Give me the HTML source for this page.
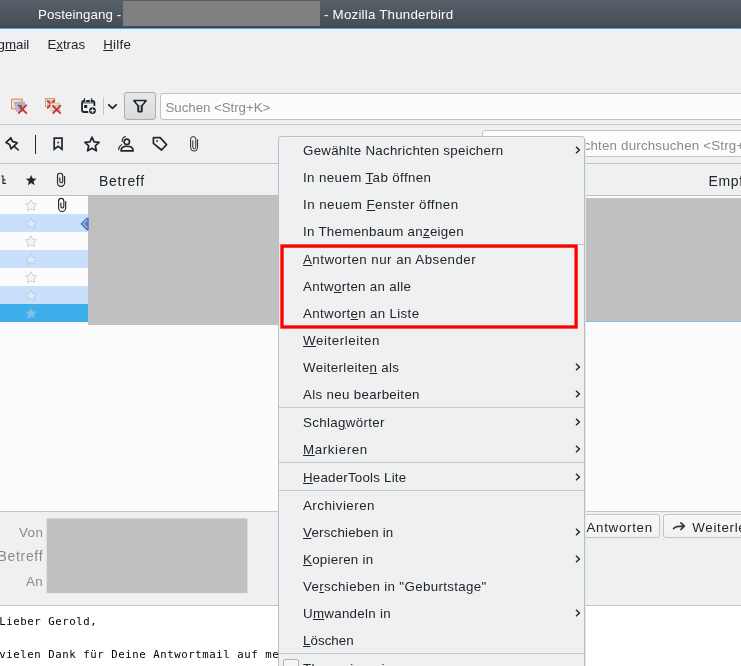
<!DOCTYPE html>
<html><head><meta charset="utf-8">
<style>
*{box-sizing:border-box;margin:0;padding:0}
html,body{width:741px;height:666px;overflow:hidden;background:#eff0f1}
body{position:relative;will-change:transform;font-family:"Liberation Sans",sans-serif;font-size:13.33px;color:#232629}
.a{position:absolute}
.t{position:absolute;white-space:nowrap;line-height:16px;height:16px}
u{text-decoration:underline;text-decoration-thickness:1px;text-underline-offset:0.5px}
svg{position:absolute;overflow:visible}
.g{color:#898b8d}
.mono{font-family:"DejaVu Sans Mono","Liberation Mono",monospace;font-size:10.67px;letter-spacing:0.58px;color:#000}
</style></head><body>

<div class="a" style="left:0;top:0;width:741px;height:28px;background:linear-gradient(#57616a,#454c53)"></div>
<div class="a" style="left:0;top:27px;width:741px;height:1px;background:#3f464d"></div>
<div class="a" style="left:0;top:28px;width:741px;height:1px;background:#3daee9"></div>
<div class="t " id="t1" style="left:38px;top:7.4px;letter-spacing:0.080px;color:#fcfcfc;">Posteingang -</div>
<div class="a" style="left:123px;top:1px;width:196.5px;height:25px;background:#808080"></div>
<div class="t " id="t2" style="left:324px;top:7.4px;letter-spacing:0.212px;color:#fcfcfc;">- Mozilla Thunderbird</div>
<div class="t " id="b1" style="left:-2.5px;top:37.1px;letter-spacing:-0.015px;">g<u>m</u>ail</div>
<div class="t " id="b2" style="left:47.4px;top:37.1px;letter-spacing:-0.015px;">E<u>x</u>tras</div>
<div class="t " id="b3" style="left:103.2px;top:37.1px;letter-spacing:0.292px;"><u>H</u>ilfe</div>
<div class="a" style="left:124px;top:92px;width:32px;height:28px;background:linear-gradient(#e6e7e8,#d9dadb);border:1px solid #aaacae;border-radius:3px"></div>
<div class="a" style="left:160px;top:93px;width:600px;height:27px;background:#fcfcfc;border:1px solid #c0c2c4;border-radius:3px"></div>
<div class="t g" id="s1" style="left:165.5px;top:99.8px;letter-spacing:-0.055px;">Suchen &lt;Strg+K&gt;</div>
<div class="a" style="left:103px;top:97px;width:1px;height:18px;background:#c3c5c7"></div>
<div class="a" style="left:0;top:124px;width:741px;height:1px;background:#c6c8ca"></div>
<svg style="left:10px;top:97px" width="18" height="18" viewBox="10 97 18 18">
<defs><linearGradient id="eg" x1="0" y1="1" x2="1" y2="0"><stop offset="0" stop-color="#fff4e6"/><stop offset="0.6" stop-color="#fdeccf"/><stop offset="1" stop-color="#f9c983"/></linearGradient>
<radialGradient id="bg2" cx="0.5" cy="0.5" r="0.6"><stop offset="0" stop-color="#d6e8fb"/><stop offset="1" stop-color="#a9b6dc"/></radialGradient></defs>
<rect x="11.6" y="99.2" width="10.7" height="9.6" fill="url(#eg)" stroke="#d98c54" stroke-width="1.1"/>
<path d="M12.2 100 L15.5 104.2 L12.2 108" fill="none" stroke="#ecc39c" stroke-width="0.7"/>
<path d="M14.4 102.2 L24.8 102.2 L23.3 111.2 L16.4 111.2 Z" fill="#b8bce0" stroke="#9aa0cc" stroke-width="0.8"/>
<path d="M14.8 102.4 L24.4 102.4 L24 103.8 L15.2 103.8 Z" fill="#a4a9d2"/>
<rect x="19.8" y="104.8" width="2.6" height="4.6" fill="#27a244"/>
<path d="M18.6 105.3 L26.3 113.2 M26.3 105.2 L18.8 113.2" stroke="#d62f25" stroke-width="1.8" stroke-linecap="round"/>
</svg>
<svg style="left:44px;top:97px" width="18" height="18" viewBox="44 97 18 18">
<rect x="45.6" y="98.5" width="9" height="8" fill="url(#eg)" stroke="#dc965e" stroke-width="1"/>
<rect x="47" y="100" width="7" height="6.5" fill="url(#bg2)"/>
<path d="M47.6 100.7 L54.3 107.9 M54.3 100.6 L47.7 107.9" stroke="#d62f25" stroke-width="1.7" stroke-linecap="round"/>
<rect x="50.8" y="103.2" width="8.8" height="7.6" fill="url(#eg)" stroke="#e6b58c" stroke-width="0.9"/>
<rect x="52.6" y="105" width="7.4" height="7" fill="url(#bg2)"/>
<path d="M53 105.8 L60.3 113.1 M60.3 105.8 L53.2 113.1" stroke="#d62f25" stroke-width="1.8" stroke-linecap="round"/>
</svg>
<svg style="left:80px;top:97px" width="18" height="18" viewBox="80 97 18 18">
<path d="M94.4 106 L94.4 103 Q94.4 101 92.6 101 L84 101 Q82 101 82 103 L82 110 Q82 112 84 112 L88.5 112" fill="none" stroke="#232629" stroke-width="1.8"/>
<path d="M82.4 102.9 L94.2 102.9" stroke="#232629" stroke-width="0.9"/>
<path d="M84.5 98.2 L84.5 101.8 M91.5 98.2 L91.5 101.8" stroke="#232629" stroke-width="1.3"/>
<path d="M85.7 99 L85.7 102.2 M90.3 99 L90.3 102.2" stroke="#eff0f1" stroke-width="0.9"/>
<rect x="84.2" y="105" width="3" height="3" fill="#232629"/>
<circle cx="92.5" cy="110.6" r="4.3" fill="#eff0f1"/>
<circle cx="92.5" cy="110.6" r="3.4" fill="#232629"/>
<path d="M90.4 110.6 L94.6 110.6 M92.5 108.5 L92.5 112.7" stroke="#f4f4f5" stroke-width="1.2"/>
</svg>
<svg style="left:107px;top:102px" width="12" height="10" viewBox="107 102 12 10">
<path d="M108.8 104.8 L112.5 108.3 L116.2 104.8" fill="none" stroke="#232629" stroke-width="1.8" stroke-linecap="round" stroke-linejoin="round"/>
</svg>
<svg style="left:130px;top:97px" width="20" height="18" viewBox="130 97 20 18">
<defs><linearGradient id="fg" x1="0" y1="0" x2="0" y2="1"><stop offset="0" stop-color="#e2e3e4"/><stop offset="0.4" stop-color="#a2a3a4"/><stop offset="1" stop-color="#b8b9ba"/></linearGradient></defs>
<path d="M134 100.6 L146 100.6 L141.9 105.6 L141.9 111 Q141.9 111.7 141.2 111.7 L138.8 111.7 Q138.1 111.7 138.1 111 L138.1 105.6 Z" fill="url(#fg)" stroke="#232629" stroke-width="1.7" stroke-linejoin="round"/>
<path d="M135.6 101.4 L144.4 101.4 L141.5 104.9 L138.5 104.9 Z" fill="#e3e4e5"/>
</svg>

<div class="a" style="left:35px;top:135px;width:1px;height:19px;background:#232629"></div>
<div class="a" style="left:482px;top:130px;width:300px;height:27px;background:#fcfcfc;border:1px solid #c0c2c4;border-radius:3px"></div>
<div class="t g" id="s2" style="left:583.7px;top:137.6px;letter-spacing:0.180px;">chten durchsuchen &lt;Strg+</div>
<div class="a" style="left:0;top:163px;width:741px;height:1px;background:#c0c2c4"></div>
<svg style="left:0;top:126px" width="210" height="36" viewBox="0 126 210 36" fill="none" stroke="#232629" stroke-linejoin="round" stroke-linecap="round">
<path d="M5.9 142.6 L10.9 137.8 L12.4 141.4 L17.2 142.9 L11 148.8 L9.6 144.4 Z" stroke-width="1.7"/>
<path d="M14.2 146.3 L18.3 150" stroke-width="1.6"/>
<path d="M54.2 138.2 L62 138.2 L62 149.3 L58.1 146.4 L54.2 149.3 Z" stroke-width="1.7" stroke-linejoin="miter"/>
<circle cx="58.1" cy="142.5" r="0.9" fill="#232629" stroke="none"/>
<path d="M92 137.2 L94.1 141.9 L99.1 142.4 L95.3 145.8 L96.4 150.8 L92 148.2 L87.6 150.8 L88.7 145.8 L84.9 142.4 L89.9 141.9 Z" stroke-width="1.7"/>
<circle cx="126.8" cy="141.8" r="2.7" stroke-width="1.6"/>
<path d="M121 150.9 Q121 146.3 126.9 146.3 Q133.2 146.3 133.2 150.9 Z" stroke-width="1.6"/>
<path d="M125.2 136.5 Q122.2 137.6 122.2 141.5 M121.6 144.6 Q118.9 146.3 118.7 149.6" stroke-width="1.1"/>
<path d="M153.4 137.7 L160.1 137.7 L166.6 144.6 L161.5 150 L153.4 143.4 Z" stroke-width="1.7"/>
<circle cx="157" cy="141" r="0.9" fill="#232629" stroke="none"/>
<path d="M197.6 139.6 L197.6 147.6 A3.5 3.5 0 0 1 190.6 147.6 L190.6 139.2 A2.6 2.6 0 0 1 195.8 139.2 L195.8 147.3 A1.5 1.5 0 0 1 192.8 147.3 L192.8 140.8" stroke-width="1"/>
</svg>

<div class="t " id="c1" style="left:99px;top:173.4px;letter-spacing:0.680px;font-size:14px;">Betreff</div>
<div class="t " id="c2" style="left:708.5px;top:173.4px;letter-spacing:0.680px;font-size:14px;">Empf</div>
<div class="a" style="left:0;top:195px;width:741px;height:1px;background:#bcbec0"></div>
<div class="a" style="left:0;top:196px;width:741px;height:315px;background:#fcfcfc"></div>
<div class="a" style="left:0;top:214px;width:741px;height:18px;background:#c8e0fc"></div>
<div class="a" style="left:0;top:250px;width:741px;height:18px;background:#c8e0fc"></div>
<div class="a" style="left:0;top:286px;width:741px;height:18px;background:#c8e0fc"></div>
<div class="a" style="left:0;top:304px;width:741px;height:18px;background:#3daee9"></div>
<div class="a" style="left:88px;top:196px;width:300px;height:129px;background:#c0c0c0"></div>
<div class="a" style="left:388px;top:196px;width:360px;height:126px;background:#fcfcfc"></div>
<div class="a" style="left:586px;top:197.5px;width:160px;height:123.5px;background:#c0c0c0"></div>
<div class="a" style="left:586px;top:321px;width:160px;height:1px;background:#7cc4ee"></div>
<svg style="left:0;top:166px" width="100" height="160" viewBox="0 166 100 160">
<path d="M1.2 176 L3 176 L3 183.3 L6 183.3 M3 179.8 L5.4 179.8" fill="none" stroke="#232629" stroke-width="1.15"/>
<path d="M31.20 174.90 L32.67 178.58 L36.62 178.84 L33.58 181.37 L34.55 185.21 L31.20 183.10 L27.85 185.21 L28.82 181.37 L25.78 178.84 L29.73 178.58 Z" fill="#232629"/>
<path transform="translate(0 0)" d="M64.6 176.4 L64.6 182.75 A3.55 3.55 0 0 1 57.5 182.75 L57.5 175.8 A2.6 2.6 0 0 1 62.7 175.8 L62.7 181.3 A1.45 1.45 0 0 1 59.8 181.3 L59.8 177.8" fill="none" stroke="#232629" stroke-width="1.15" stroke-linecap="round"/>
<path transform="translate(1.1 25.2)" d="M64.6 176.4 L64.6 182.75 A3.55 3.55 0 0 1 57.5 182.75 L57.5 175.8 A2.6 2.6 0 0 1 62.7 175.8 L62.7 181.3 A1.45 1.45 0 0 1 59.8 181.3 L59.8 177.8" fill="none" stroke="#232629" stroke-width="1.15" stroke-linecap="round"/>
<path d="M31.00 199.70 L32.76 203.27 L36.71 203.85 L33.85 206.63 L34.53 210.55 L31.00 208.70 L27.47 210.55 L28.15 206.63 L25.29 203.85 L29.24 203.27 Z" fill="#f6f6f6" stroke="#d2d2d2" stroke-width="1" stroke-linejoin="round"/>
<path d="M31.00 217.70 L32.76 221.27 L36.71 221.85 L33.85 224.63 L34.53 228.55 L31.00 226.70 L27.47 228.55 L28.15 224.63 L25.29 221.85 L29.24 221.27 Z" fill="#dceafc" stroke="#bccbdd" stroke-width="1" stroke-linejoin="round"/>
<path d="M31.00 235.70 L32.76 239.27 L36.71 239.85 L33.85 242.63 L34.53 246.55 L31.00 244.70 L27.47 246.55 L28.15 242.63 L25.29 239.85 L29.24 239.27 Z" fill="#f6f6f6" stroke="#d2d2d2" stroke-width="1" stroke-linejoin="round"/>
<path d="M31.00 253.70 L32.76 257.27 L36.71 257.85 L33.85 260.63 L34.53 264.55 L31.00 262.70 L27.47 264.55 L28.15 260.63 L25.29 257.85 L29.24 257.27 Z" fill="#dceafc" stroke="#bccbdd" stroke-width="1" stroke-linejoin="round"/>
<path d="M31.00 271.70 L32.76 275.27 L36.71 275.85 L33.85 278.63 L34.53 282.55 L31.00 280.70 L27.47 282.55 L28.15 278.63 L25.29 275.85 L29.24 275.27 Z" fill="#f6f6f6" stroke="#d2d2d2" stroke-width="1" stroke-linejoin="round"/>
<path d="M31.00 289.70 L32.76 293.27 L36.71 293.85 L33.85 296.63 L34.53 300.55 L31.00 298.70 L27.47 300.55 L28.15 296.63 L25.29 293.85 L29.24 293.27 Z" fill="#dceafc" stroke="#bccbdd" stroke-width="1" stroke-linejoin="round"/>
<path d="M31.00 307.70 L32.76 311.27 L36.71 311.85 L33.85 314.63 L34.53 318.55 L31.00 316.70 L27.47 318.55 L28.15 314.63 L25.29 311.85 L29.24 311.27 Z" fill="#7cc3ea" stroke="#66b2dc" stroke-width="1" stroke-linejoin="round"/>
<path d="M81.3 223.8 L87 218.2 L88 218.2 L88 229.6 L87 229.6 Z" fill="#9dbbe6" stroke="#2f5fa8" stroke-width="1.1"/>
<path d="M84 223.8 L88 220.5 L88 227.3 Z" fill="#4a7cc4"/>
</svg>
<div class="a" style="left:0;top:511px;width:741px;height:1px;background:#c3c5c7"></div>
<div class="a" style="left:0;top:512px;width:741px;height:93px;background:#eff0f1"></div>
<svg style="left:0;top:0" width="300" height="666"><rect x="46.7" y="518.5" width="200.7" height="74.6" fill="#c0c0c0"/></svg>
<div class="t g" id="h1" style="left:19px;top:525.2px;letter-spacing:0.406px;">Von</div>
<div class="t g" id="h2" style="left:-2.5px;top:547.9px;letter-spacing:0.680px;font-size:14px;">Betreff</div>
<div class="t g" id="h3" style="left:26px;top:574.4px;letter-spacing:0.406px;">An</div>
<div class="a" style="left:0;top:605px;width:741px;height:1px;background:#c3c5c7"></div>
<div class="a" style="left:0;top:606px;width:741px;height:60px;background:#ffffff"></div>
<div class="t mono" id="p1" style="left:-0.7px;top:614.4px">Lieber Gerold,</div>
<div class="t mono" id="p2" style="left:-0.7px;top:647.4px">vielen Dank für Deine Antwortmail auf me</div>
<div class="a" style="left:540px;top:514px;width:120px;height:24px;background:linear-gradient(#f8f8f9,#f1f2f2);border:1px solid #c2c4c6;border-radius:3px"></div>
<div class="t " id="k1" style="left:586.5px;top:520.1px;letter-spacing:0.692px;">Antworten</div>
<div class="a" style="left:663px;top:514px;width:120px;height:24px;background:linear-gradient(#f8f8f9,#f1f2f2);border:1px solid #c2c4c6;border-radius:3px"></div>
<div class="t " id="k2" style="left:692.3px;top:520.1px;letter-spacing:0.692px;">Weiterle</div>
<svg style="left:670px;top:518px" width="18" height="16" viewBox="670 518 18 16"><path d="M673.6 528.7 C674.8 526.4 677.5 525.9 684 526.1 M680.9 522.8 L684.3 526.1 L680.9 529.5" fill="none" stroke="#34373a" stroke-width="1.7" stroke-linecap="round" stroke-linejoin="round"/></svg>
<div class="a" style="left:585px;top:139px;width:1px;height:527px;background:#e4e5e6"></div>
<div class="a" style="left:278px;top:136px;width:307px;height:540px;background:#eff0f1;border:1px solid #bcbfc2;border-radius:3px 3px 0 0"></div>
<div class="a" style="left:279px;top:244px;width:305px;height:1px;background:#c6c9cb"></div>
<div class="a" style="left:279px;top:407px;width:305px;height:1px;background:#c6c9cb"></div>
<div class="a" style="left:279px;top:462px;width:305px;height:1px;background:#c6c9cb"></div>
<div class="a" style="left:279px;top:490px;width:305px;height:1px;background:#c6c9cb"></div>
<div class="a" style="left:279px;top:653px;width:305px;height:1px;background:#c6c9cb"></div>
<div class="t " id="m1" style="left:303px;top:143.4px;letter-spacing:0.264px;">Gewählte Nachrichten speichern</div>
<svg style="left:575px;top:145.5px" width="6" height="8" viewBox="0 0 6 8"><path d="M1 0.8 L4.4 4 L1 7.2" fill="none" stroke="#232629" stroke-width="1.4"/></svg>
<div class="t " id="m2" style="left:303px;top:170.4px;letter-spacing:0.386px;">In neuem <u>T</u>ab öffnen</div>
<div class="t " id="m3" style="left:303px;top:197.4px;letter-spacing:0.462px;">In neuem <u>F</u>enster öffnen</div>
<div class="t " id="m4" style="left:303px;top:224.4px;letter-spacing:0.286px;">In Themenbaum an<u>z</u>eigen</div>
<div class="t " id="m5" style="left:303px;top:252.4px;letter-spacing:0.460px;"><u>A</u>ntworten nur an Absender</div>
<div class="t " id="m6" style="left:303px;top:279.4px;letter-spacing:0.314px;">Antw<u>o</u>rten an alle</div>
<div class="t " id="m7" style="left:303px;top:306.4px;letter-spacing:0.331px;">Antwort<u>e</u>n an Liste</div>
<div class="t " id="m8" style="left:303px;top:333.4px;letter-spacing:0.562px;"><u>W</u>eiterleiten</div>
<div class="t " id="m9" style="left:303px;top:360.4px;letter-spacing:0.343px;">Weiterleite<u>n</u> als</div>
<svg style="left:575px;top:362.5px" width="6" height="8" viewBox="0 0 6 8"><path d="M1 0.8 L4.4 4 L1 7.2" fill="none" stroke="#232629" stroke-width="1.4"/></svg>
<div class="t " id="m10" style="left:303px;top:387.4px;letter-spacing:0.317px;">Als neu bearbeiten</div>
<svg style="left:575px;top:389.5px" width="6" height="8" viewBox="0 0 6 8"><path d="M1 0.8 L4.4 4 L1 7.2" fill="none" stroke="#232629" stroke-width="1.4"/></svg>
<div class="t " id="m11" style="left:303px;top:415.4px;letter-spacing:0.322px;">Schla<u>g</u>wörter</div>
<svg style="left:575px;top:417.5px" width="6" height="8" viewBox="0 0 6 8"><path d="M1 0.8 L4.4 4 L1 7.2" fill="none" stroke="#232629" stroke-width="1.4"/></svg>
<div class="t " id="m12" style="left:303px;top:442.4px;letter-spacing:0.616px;"><u>M</u>arkieren</div>
<svg style="left:575px;top:444.5px" width="6" height="8" viewBox="0 0 6 8"><path d="M1 0.8 L4.4 4 L1 7.2" fill="none" stroke="#232629" stroke-width="1.4"/></svg>
<div class="t " id="m13" style="left:303px;top:470.4px;letter-spacing:0.210px;"><u>H</u>eaderTools Lite</div>
<svg style="left:575px;top:472.5px" width="6" height="8" viewBox="0 0 6 8"><path d="M1 0.8 L4.4 4 L1 7.2" fill="none" stroke="#232629" stroke-width="1.4"/></svg>
<div class="t " id="m14" style="left:303px;top:498.4px;letter-spacing:0.479px;">Archivieren</div>
<div class="t " id="m15" style="left:303px;top:525.4px;letter-spacing:0.219px;"><u>V</u>erschieben in</div>
<svg style="left:575px;top:527.5px" width="6" height="8" viewBox="0 0 6 8"><path d="M1 0.8 L4.4 4 L1 7.2" fill="none" stroke="#232629" stroke-width="1.4"/></svg>
<div class="t " id="m16" style="left:303px;top:552.4px;letter-spacing:0.273px;"><u>K</u>opieren in</div>
<svg style="left:575px;top:554.5px" width="6" height="8" viewBox="0 0 6 8"><path d="M1 0.8 L4.4 4 L1 7.2" fill="none" stroke="#232629" stroke-width="1.4"/></svg>
<div class="t " id="m17" style="left:303px;top:579.4px;letter-spacing:0.346px;">Ve<u>r</u>schieben in "Geburtstage"</div>
<div class="t " id="m18" style="left:303px;top:606.4px;letter-spacing:0.280px;">U<u>m</u>wandeln in</div>
<svg style="left:575px;top:608.5px" width="6" height="8" viewBox="0 0 6 8"><path d="M1 0.8 L4.4 4 L1 7.2" fill="none" stroke="#232629" stroke-width="1.4"/></svg>
<div class="t " id="m19" style="left:303px;top:633.4px;letter-spacing:0.045px;"><u>L</u>öschen</div>
<div class="t " id="m20" style="left:303px;top:661.4px;letter-spacing:0.343px;">Thema ignorieren</div>
<div class="a" style="left:283px;top:659px;width:16px;height:16px;background:#f6f6f7;border:1px solid #b0b3b5;border-radius:2px"></div>
<svg style="left:0;top:0" width="741" height="666"><rect x="282" y="246.1" width="294.1" height="80.9" fill="none" stroke="#ff0000" stroke-width="3.3"/></svg>
</body></html>
